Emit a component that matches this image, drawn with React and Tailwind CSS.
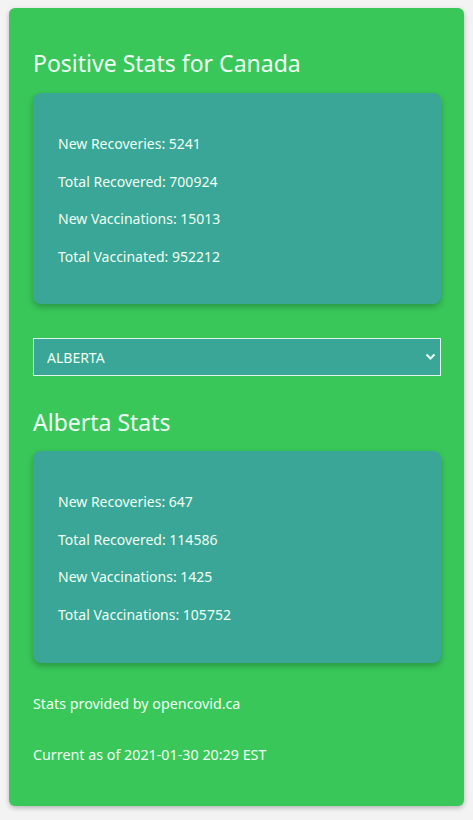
import React, { useState } from 'react';

const StatCard = ({ rows, bottom = 'pb-[36px]' }) => (
  <div className={`rounded-lg bg-[#3aa698] px-[25px] pt-[40px] ${bottom} shadow-[0_3px_6px_rgba(0,0,0,0.25)]`}>
    {rows.map((r, i) => (
      <p key={i} className={`text-[14px] leading-[22px] ${i > 0 ? 'mt-[15.7px]' : ''}`}>
        {r}
      </p>
    ))}
  </div>
);

const App = () => {
  const [province, setProvince] = useState('ALBERTA');

  return (
    <div className="min-h-[820px] bg-[#f3f3f3] px-[9px] pt-[8px] pb-[15px] font-['Noto_Sans',sans-serif] text-[#eefff2]">
      <div className="rounded-md bg-[#39c75a] pl-[24px] pr-[23px] pt-[39px] pb-[40px] shadow-[0_2px_5px_rgba(0,0,0,0.25)]">
        <h2 className="text-[23px] leading-[32px] mb-[14px]">Positive Stats for Canada</h2>
        <StatCard
          rows={[
            'New Recoveries: 5241',
            'Total Recovered: 700924',
            'New Vaccinations: 15013',
            'Total Vaccinated: 952212',
          ]}
        />

        <div className="relative mt-[34px]">
          <select
            value={province}
            onChange={(e) => setProvince(e.target.value)}
            className="w-full h-[38px] appearance-none border border-[#dff5ea] bg-[#3aa698] pl-[13px] text-[14px] text-[#eefff2] outline-none"
          >
            <option>ALBERTA</option>
            <option>BRITISH COLUMBIA</option>
            <option>ONTARIO</option>
          </select>
          <svg className="pointer-events-none absolute right-[5px] top-[14px]" width="11" height="10" viewBox="0 0 11 10">
            <path d="M1.5 2.5 L5.5 6.5 L9.5 2.5" fill="none" stroke="#eefff2" strokeWidth="2" />
          </svg>
        </div>

        <h2 className="mt-[30px] text-[23px] leading-[32px] mb-[13px]">Alberta Stats</h2>
        <StatCard
          bottom="pb-[37px]"
          rows={[
            'New Recoveries: 647',
            'Total Recovered: 114586',
            'New Vaccinations: 1425',
            'Total Vaccinations: 105752',
          ]}
        />

        <p className="mt-[30px] text-[14.3px] leading-[22px]">Stats provided by opencovid.ca</p>
        <p className="mt-[29px] text-[14.3px] leading-[22px]">Current as of 2021-01-30 20:29 EST</p>
      </div>
    </div>
  );
};

export default App;
